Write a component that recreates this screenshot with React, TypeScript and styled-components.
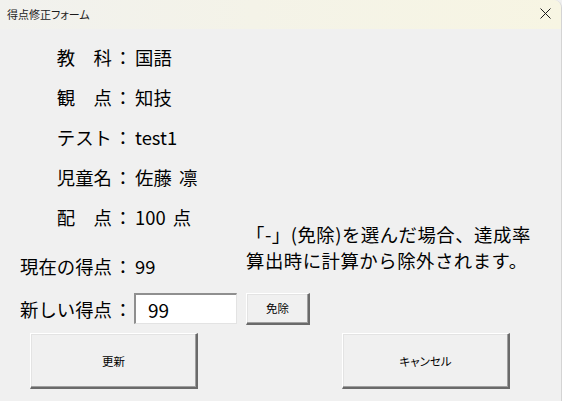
import React from "react";
import styled, { createGlobalStyle } from "styled-components";

const Global = createGlobalStyle`
  html, body { margin: 0; padding: 0; background: #f0f0f0; }
  body { font-family: "Noto Sans CJK JP", "Noto Sans", sans-serif; color: #000; }
`;

const Window = styled.div`
  width: 562px;
  height: 401px;
  box-sizing: border-box;
  background: #f0f0f0;
  border-right: 1px solid #d4d4d4;
  border-top-right-radius: 8px;
  overflow: hidden;
  display: flex;
  flex-direction: column;
`;

const TitleBar = styled.div`
  height: 29px;
  flex: none;
  display: flex;
  align-items: center;
  justify-content: space-between;
  padding: 0 10px 0 7px;
  background: linear-gradient(90deg, #f1f1ee 0%, #f4f3e8 45%, #f7f5e3 100%);
`;

const Title = styled.span`
  font-size: 11px;
  font-feature-settings: "palt";
  color: #1b1b1b;
  line-height: 1;
  margin-top: -1px;
`;

const Close = styled.svg`
  width: 11px;
  height: 11px;
  margin-top: -2px;
`;

const Body = styled.div`
  padding-top: 8px;
  display: flex;
  flex-direction: column;
`;

const Form = styled.div`
  display: grid;
  grid-template-columns: 112px 22px 112px 1fr;
  grid-template-rows: repeat(5, 40px) 49px 45px;
  font-size: 18.4px;
`;

const Label = styled.div<{ $row: number }>`
  grid-column: 1;
  grid-row: ${(p) => p.$row};
  align-self: end;
  justify-self: end;
  white-space: pre;
  line-height: 40px;
  height: 40px;
`;

const Colon = styled.div<{ $row: number }>`
  grid-column: 2;
  grid-row: ${(p) => p.$row};
  align-self: end;
  text-align: center;
  line-height: 40px;
  height: 40px;
`;

const Value = styled.div<{ $row: number }>`
  grid-column: 3;
  grid-row: ${(p) => p.$row};
  align-self: end;
  padding-left: 1px;
  white-space: nowrap;
  word-spacing: 3px;
  line-height: 40px;
  height: 40px;
`;

const Note = styled.div`
  grid-column: 4;
  grid-row: 5 / 7;
  align-self: end;
  margin-bottom: 13px;
  line-height: 26px;
  letter-spacing: 0.5px;
  white-space: nowrap;
`;

const InputCell = styled.div`
  grid-column: 3;
  grid-row: 7;
  align-self: center;
  display: flex;
`;

const ScoreInput = styled.input`
  box-sizing: border-box;
  width: 103px;
  height: 31px;
  padding: 0 0 0 12px;
  margin: 0;
  font-family: inherit;
  font-size: 19px;
  color: #000;
  background: #fff;
  border-style: solid;
  border-width: 2px 1px 1px 2px;
  border-color: #8f8f8f #e3e3e3 #e3e3e3 #8f8f8f;
  outline: none;
`;

const ExemptCell = styled.div`
  grid-column: 4;
  grid-row: 7;
  align-self: center;
`;

const ClassicButton = styled.button<{ $w: number; $h: number }>`
  box-sizing: border-box;
  width: ${(p) => p.$w}px;
  height: ${(p) => p.$h}px;
  margin: 0;
  padding: 0;
  background: #f0f0f0;
  font-family: inherit;
  font-size: 11.5px;
  color: #000;
  border-style: solid;
  border-width: 1px 2px 2px 1px;
  border-color: #ffffff #6a6a6a #6a6a6a #ffffff;
  box-shadow: inset -1px -1px 0 #a0a0a0, inset 1px 1px 0 #e3e3e3;
  font-feature-settings: "palt";
  cursor: default;
`;

const ButtonRow = styled.div`
  display: flex;
  gap: 144px;
  padding-left: 30px;
  margin-top: 2px;
`;

const rows: [string, string][] = [
  ["教　科", "国語"],
  ["観　点", "知技"],
  ["テスト", "test1"],
  ["児童名", "佐藤 凛"],
  ["配　点", "100 点"],
  ["現在の得点", "99"],
];

export default function App() {
  return (
    <>
      <Global />
      <Window>
        <TitleBar>
          <Title>得点修正フォーム</Title>
          <Close viewBox="0 0 11 11">
            <path d="M0.5 0.5 L10.5 10.5 M10.5 0.5 L0.5 10.5" stroke="#1a1a1a" strokeWidth="1" fill="none" />
          </Close>
        </TitleBar>
        <Body>
          <Form>
            {rows.map(([l, v], i) => (
              <React.Fragment key={l}>
                <Label $row={i + 1}>{l}</Label>
                <Colon $row={i + 1}>：</Colon>
                <Value $row={i + 1}>{v}</Value>
              </React.Fragment>
            ))}
            <Note>
              「-」(免除)を選んだ場合、達成率
              <br />
              算出時に計算から除外されます。
            </Note>
            <Label $row={7} style={{ alignSelf: "center" }}>新しい得点</Label>
            <Colon $row={7} style={{ alignSelf: "center" }}>：</Colon>
            <InputCell>
              <ScoreInput defaultValue="99" />
            </InputCell>
            <ExemptCell>
              <ClassicButton $w={64} $h={32}>免除</ClassicButton>
            </ExemptCell>
          </Form>
          <ButtonRow>
            <ClassicButton $w={168} $h={56}>更新</ClassicButton>
            <ClassicButton $w={168} $h={56}>キャンセル</ClassicButton>
          </ButtonRow>
        </Body>
      </Window>
    </>
  );
}
